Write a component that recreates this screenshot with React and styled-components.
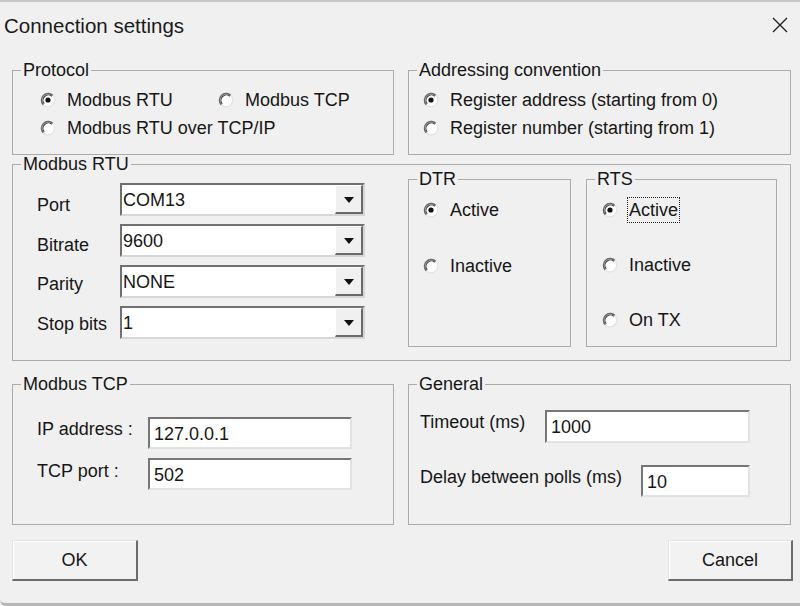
import React from 'react';
import styled, { createGlobalStyle } from 'styled-components';

const GlobalStyle = createGlobalStyle`
  html, body {
    margin: 0;
    padding: 0;
    background: #f0f0f0;
  }
  body {
    font-family: "Liberation Sans", Arial, sans-serif;
    color: #161616;
  }
  * {
    box-sizing: border-box;
  }
`;

const Dialog = styled.div`
  width: 800px;
  height: 606px;
  background: #f0f0f0;
  border-top: 2px solid #c6c6c6;
  border-bottom: 3px solid #b6b6b6;
  border-bottom-left-radius: 6px;
  display: flex;
  flex-direction: column;
  overflow: hidden;
`;

const TitleBar = styled.div`
  height: 61px;
  flex: none;
  display: flex;
  align-items: flex-start;
  justify-content: space-between;
  padding: 12px 12px 0 4px;
`;

const Title = styled.div`
  font-size: 20.5px;
  line-height: 24px;
  color: #1a1a1a;
`;

const CloseIcon = styled.svg`
  margin-top: 3px;
  width: 16px;
  height: 16px;
`;

const Body = styled.div`
  display: flex;
  flex-direction: column;
  padding: 0 9px 0 12px;
`;

const Row = styled.div`
  display: grid;
  grid-template-columns: 382px 383px;
  column-gap: 14px;
  margin-top: ${p => p.$top || 0}px;
  height: ${p => p.$h}px;
`;

const Group = styled.fieldset`
  margin: 0;
  padding: 0;
  min-width: 0;
  border: 1px solid #ababab;
  height: ${p => (p.$h ? `${p.$h}px` : 'auto')};
`;

const Legend = styled.legend`
  margin-left: 8px;
  padding: 0 2px;
  font-size: 18px;
  line-height: 14px;
`;

const GroupInner = styled.div`
  padding: ${p => p.$pad};
  display: ${p => p.$flex ? 'flex' : 'block'};
  flex-direction: column;
  gap: ${p => p.$gap || 0}px;
`;

const RadioGrid = styled.div`
  display: grid;
  grid-template-columns: ${p => p.$cols || '1fr'};
  grid-auto-rows: 28px;
`;

const RadioItem = styled.label`
  display: flex;
  align-items: center;
  gap: 11px;
  height: 28px;
  font-size: 18px;
  white-space: nowrap;

  svg {
    flex: none;
  }
`;

const RadioText = styled.span`
  line-height: 24px;
  ${p => p.$focus && `
    outline: 1px dotted #222;
    outline-offset: 0;
    padding: 0 1px;
    margin-left: -1px;
  `}
`;

const RtuLayout = styled.div`
  display: flex;
  align-items: flex-start;
  padding: 0 13px 0 24px;
`;

const FormGrid = styled.div`
  display: grid;
  grid-template-columns: ${p => p.$cols};
  grid-auto-rows: ${p => p.$rowH}px;
  row-gap: ${p => p.$gap}px;
  margin-top: ${p => p.$top}px;
`;

const FieldLabel = styled.span`
  font-size: 18px;
  line-height: 22px;
  align-self: center;
  white-space: nowrap;
  margin-top: ${p => p.$shift || 0}px;
`;

const Combo = styled.div`
  display: flex;
  align-items: stretch;
  background: #fff;
  border: 2px solid;
  border-color: #707070 #d6d6d6 #d6d6d6 #707070;
`;

const ComboValue = styled.span`
  flex: 1;
  padding: 2px 0 0 1px;
  font-size: 18px;
  line-height: 26px;
`;

const DropButton = styled.span`
  width: 28px;
  display: flex;
  align-items: center;
  justify-content: center;
  background: #f0f0f0;
  border-style: solid;
  border-width: 1px 2px 2px 1px;
  border-color: #ffffff #6a6a6a #6a6a6a #ffffff;

  &::after {
    content: '';
    border-left: 5px solid transparent;
    border-right: 5px solid transparent;
    border-top: 6px solid #111;
    margin-top: 1px;
  }
`;

const SideGroups = styled.div`
  display: flex;
  gap: 15px;
  margin-left: 43px;
  margin-top: 1px;
`;

const TextBox = styled.input`
  width: ${p => p.$w}px;
  height: ${p => p.$h || 32}px;
  background: #fff;
  border: 2px solid;
  border-color: #767676 #e2e2e2 #e2e2e2 #767676;
  padding: 2px 0 0 4px;
  font-family: "Liberation Sans", Arial, sans-serif;
  font-size: 18px;
  color: #161616;
  outline: none;
`;

const GeneralRow = styled.div`
  display: flex;
  align-items: center;
  justify-content: space-between;
  margin-top: ${p => p.$top}px;
`;

const ButtonRow = styled.div`
  display: flex;
  justify-content: space-between;
  margin: 15px -2px 0 0;
`;

const Button = styled.button`
  width: ${p => p.$w}px;
  height: 41px;
  background: #f2f2f2;
  border-style: solid;
  border-width: 1px 2px 2px 1px;
  border-color: #e2e2e2 #6c6c6c #6c6c6c #e2e2e2;
  box-shadow: inset 1px 1px 0 #ffffff;
  font-family: "Liberation Sans", Arial, sans-serif;
  font-size: 18px;
  color: #161616;
  padding: 0;
`;

const Radio = ({ checked }) => (
  <svg width="16" height="16" viewBox="0 0 16 16">
    <circle cx="8" cy="8" r="6.8" fill="#fff" stroke="#e2e2e2" strokeWidth="1.2" />
    <path d="M3.2 12.8 A6.8 6.8 0 0 1 12.8 3.2" fill="none" stroke="#6a6a6a" strokeWidth="1.5" />
    <path d="M4.2 11.8 A5.4 5.4 0 0 1 11.8 4.2" fill="none" stroke="#3a3a3a" strokeWidth="1.1" />
    {checked && <circle cx="8" cy="8" r="2.6" fill="#111" />}
  </svg>
);

const RadioOption = ({ label, checked, focus }) => (
  <RadioItem>
    <Radio checked={checked} />
    <RadioText $focus={focus}>{label}</RadioText>
  </RadioItem>
);

const ComboBox = ({ value }) => (
  <Combo>
    <ComboValue>{value}</ComboValue>
    <DropButton />
  </Combo>
);

const rtuFields = [
  { label: 'Port', value: 'COM13', shift: 10 },
  { label: 'Bitrate', value: '9600', shift: 8 },
  { label: 'Parity', value: 'NONE', shift: 5 },
  { label: 'Stop bits', value: '1', shift: 2 },
];

export default function App() {
  return (
    <>
      <GlobalStyle />
      <Dialog>
        <TitleBar>
          <Title>Connection settings</Title>
          <CloseIcon viewBox="0 0 16 16">
            <path d="M1 1 L15 15 M15 1 L1 15" stroke="#222" strokeWidth="1.4" />
          </CloseIcon>
        </TitleBar>

        <Body>
          <Row $h={92}>
            <Group>
              <Legend>Protocol</Legend>
              <GroupInner $pad="9px 0 0 27px">
                <RadioGrid $cols="178px auto">
                  <RadioOption label="Modbus RTU" checked />
                  <RadioOption label="Modbus TCP" />
                  <RadioOption label="Modbus RTU over TCP/IP" />
                </RadioGrid>
              </GroupInner>
            </Group>
            <Group>
              <Legend>Addressing convention</Legend>
              <GroupInner $pad="9px 0 0 14px">
                <RadioGrid>
                  <RadioOption label="Register address (starting from 0)" checked />
                  <RadioOption label="Register number (starting from 1)" />
                </RadioGrid>
              </GroupInner>
            </Group>
          </Row>

          <Group $h={204} style={{ marginTop: 2 }}>
            <Legend>Modbus RTU</Legend>
            <RtuLayout>
              <FormGrid $cols="83px 245px" $rowH={33} $gap={8} $top={12}>
                {rtuFields.map(f => (
                  <React.Fragment key={f.label}>
                    <FieldLabel $shift={f.shift}>{f.label}</FieldLabel>
                    <ComboBox value={f.value} />
                  </React.Fragment>
                ))}
              </FormGrid>
              <SideGroups>
                <Group $h={175} style={{ width: 163 }}>
                  <Legend>DTR</Legend>
                  <GroupInner $pad="10px 0 0 14px" $flex $gap={28}>
                    <RadioOption label="Active" checked />
                    <RadioOption label="Inactive" />
                  </GroupInner>
                </Group>
                <Group $h={175} style={{ width: 191 }}>
                  <Legend>RTS</Legend>
                  <GroupInner $pad="10px 0 0 15px" $flex $gap={27}>
                    <RadioOption label="Active" checked focus />
                    <RadioOption label="Inactive" />
                    <RadioOption label="On TX" />
                  </GroupInner>
                </Group>
              </SideGroups>
            </RtuLayout>
          </Group>

          <Row $h={148} $top={16}>
            <Group>
              <Legend>Modbus TCP</Legend>
              <GroupInner $pad="0 0 0 24px">
                <FormGrid $cols="111px 204px" $rowH={32} $gap={9} $top={26}>
                  <FieldLabel $shift={-9}>IP address :</FieldLabel>
                  <TextBox $w={204} readOnly value="127.0.0.1" />
                  <FieldLabel $shift={-7}>TCP port :</FieldLabel>
                  <TextBox $w={204} readOnly value="502" />
                </FormGrid>
              </GroupInner>
            </Group>
            <Group>
              <Legend>General</Legend>
              <GroupInner $pad="0 40px 0 11px">
                <GeneralRow $top={19}>
                  <FieldLabel $shift={-9}>Timeout (ms)</FieldLabel>
                  <TextBox $w={205} $h={33} readOnly value="1000" />
                </GeneralRow>
                <GeneralRow $top={22}>
                  <FieldLabel $shift={-8}>Delay between polls (ms)</FieldLabel>
                  <TextBox $w={109} readOnly value="10" />
                </GeneralRow>
              </GroupInner>
            </Group>
          </Row>

          <ButtonRow>
            <Button $w={126}>OK</Button>
            <Button $w={125}>Cancel</Button>
          </ButtonRow>
        </Body>
      </Dialog>
    </>
  );
}
